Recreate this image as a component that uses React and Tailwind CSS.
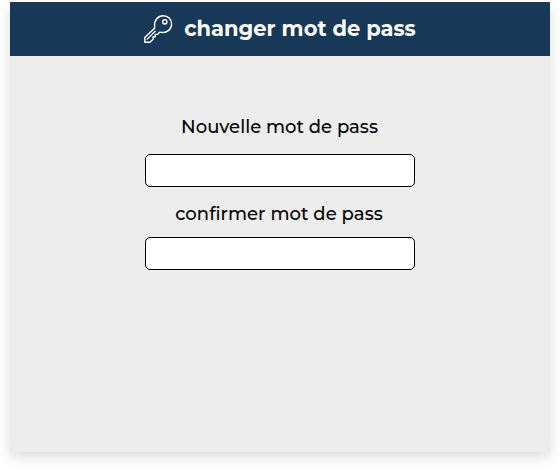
function KeyIcon() {
  return (
    <svg
      className="-ml-px mr-[11px] size-[30px] shrink-0"
      viewBox="0 0 30 30"
      fill="none"
      stroke="white"
      strokeWidth="1.4"
      strokeLinejoin="round"
    >
      <path d="M11.6 12.500C11 6.300 15 1.700 20.300 1.700c4.700 0 8.300 3.600 8.300 8.200 0 5.200-4.400 9.200-9.800 8.500L16.600 18.200 14.600 20.400H12.300V22.800H10.100V25.300L6.900 28.300H1.800V23.500L11.600 14.200Z" />
      <path d="M12.500 17 3.800 25.600" strokeWidth="1.2" />
      <circle cx="21.800" cy="7.800" r="2.100" strokeWidth="1.5" />
    </svg>
  );
}

function Field({ label, labelClass, inputClass }) {
  return (
    <label className="flex flex-col items-center">
      <span className={`flex h-6 items-center whitespace-nowrap text-[18px] font-medium leading-6 ${labelClass}`}>
        {label}
      </span>
      <input
        type="password"
        className={`h-[33px] w-[270px] rounded-[5px] border border-black bg-white px-2 outline-none ${inputClass}`}
      />
    </label>
  );
}

export default function App() {
  return (
    <div className="h-[470px] w-[560px] overflow-hidden bg-white px-[10px] pt-[2px] font-['Montserrat','Inter',sans-serif] text-black">
      <main className="h-[450px] bg-[#ededed] shadow-[0_5px_12px_rgba(0,0,0,0.14)]">
        <header className="flex h-[54px] items-center justify-center bg-[#173857] text-white">
          <KeyIcon />
          <h1 className="whitespace-nowrap text-[21px] font-bold leading-7">
            changer mot de pass
          </h1>
        </header>
        <form className="flex flex-col items-center pt-[59px]">
          <Field label="Nouvelle mot de pass" labelClass="pr-px" inputClass="mt-[15px]" />
          <div className="h-[15px]" />
          <Field label="confirmer mot de pass" labelClass="pr-[2px] tracking-[0.05px]" inputClass="mt-[11px]" />
        </form>
      </main>
    </div>
  );
}
